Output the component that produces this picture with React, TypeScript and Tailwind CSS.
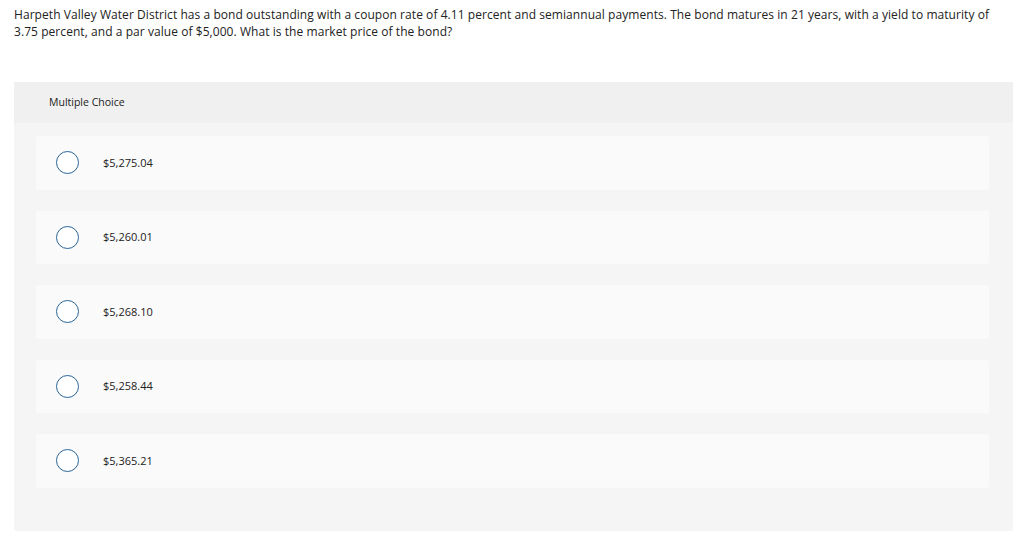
import React from "react";

const options = ["$5,275.04", "$5,260.01", "$5,268.10", "$5,258.44", "$5,365.21"];

export default function App() {
  return (
    <div className="w-[1024px] h-[540px] bg-white text-[#222222]" style={{ fontFamily: "'Open Sans', 'Liberation Sans', sans-serif" }}>
      <div className="pl-[14px] pr-[20px] pt-[6px] text-[12px] leading-[17px] tracking-[0.06px]">
        Harpeth Valley Water District has a bond outstanding with a coupon rate of 4.11 percent and semiannual payments. The bond matures in 21 years, with a yield to maturity of 3.75 percent, and a par value of $5,000. What is the market price of the bond?
      </div>
      <div className="ml-[14px] mt-[42px] w-[999px] h-[449px] bg-[#f5f5f5] rounded-b-[3px]">
        <div className="h-[41px] bg-[#f0f0f0] pl-[35px] flex items-center text-[10.5px]">Multiple Choice</div>
        <div className="flex flex-col gap-[21px] pl-[22px] pr-[24px] pt-[13px]">
          {options.map((o) => (
            <div key={o} className="h-[53.5px] bg-[#fafafa] rounded-[2px] flex items-center">
              <div className="ml-[20px] w-[23px] h-[23px] rounded-full border-[1.3px] border-[#2a6496] bg-white" />
              <div className="ml-[24px] text-[11px]">{o}</div>
            </div>
          ))}
        </div>
      </div>
    </div>
  );
}
